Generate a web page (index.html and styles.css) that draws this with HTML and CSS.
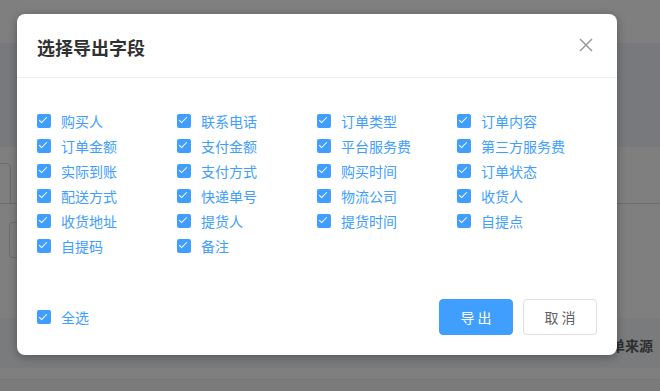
FILE: index.html
```html
<!DOCTYPE html>
<html lang="zh-CN">
<head>
<meta charset="utf-8">
<title>选择导出字段</title>
<link rel="stylesheet" href="styles.css">
</head>
<body>
<div class="page">
  <div class="topbar"></div>
  <div class="band"></div>
  <div class="tabs"><div class="tab"></div></div>
  <div class="filters"><div class="input"></div></div>
  <div class="table">
    <div class="thead"><span class="th">订单来源</span></div>
    <div class="trow"></div>
    <div class="trow alt"></div>
  </div>
</div>

<div class="mask"></div>

<div class="dialog" role="dialog">
  <div class="dlg-header">
    <span class="dlg-title">选择导出字段</span>
    <button class="dlg-close" aria-label="关闭">
      <svg width="14" height="14" viewBox="0 0 14 14"><path d="M1 1L13 13M13 1L1 13" stroke="#909399" stroke-width="1.4" fill="none"/></svg>
    </button>
  </div>
  <div class="dlg-body">
    <div class="grid">
      <label class="cb"><span class="box"></span><span class="lbl">购买人</span></label>
      <label class="cb"><span class="box"></span><span class="lbl">联系电话</span></label>
      <label class="cb"><span class="box"></span><span class="lbl">订单类型</span></label>
      <label class="cb"><span class="box"></span><span class="lbl">订单内容</span></label>
      <label class="cb"><span class="box"></span><span class="lbl">订单金额</span></label>
      <label class="cb"><span class="box"></span><span class="lbl">支付金额</span></label>
      <label class="cb"><span class="box"></span><span class="lbl">平台服务费</span></label>
      <label class="cb"><span class="box"></span><span class="lbl">第三方服务费</span></label>
      <label class="cb"><span class="box"></span><span class="lbl">实际到账</span></label>
      <label class="cb"><span class="box"></span><span class="lbl">支付方式</span></label>
      <label class="cb"><span class="box"></span><span class="lbl">购买时间</span></label>
      <label class="cb"><span class="box"></span><span class="lbl">订单状态</span></label>
      <label class="cb"><span class="box"></span><span class="lbl">配送方式</span></label>
      <label class="cb"><span class="box"></span><span class="lbl">快递单号</span></label>
      <label class="cb"><span class="box"></span><span class="lbl">物流公司</span></label>
      <label class="cb"><span class="box"></span><span class="lbl">收货人</span></label>
      <label class="cb"><span class="box"></span><span class="lbl">收货地址</span></label>
      <label class="cb"><span class="box"></span><span class="lbl">提货人</span></label>
      <label class="cb"><span class="box"></span><span class="lbl">提货时间</span></label>
      <label class="cb"><span class="box"></span><span class="lbl">自提点</span></label>
      <label class="cb"><span class="box"></span><span class="lbl">自提码</span></label>
      <label class="cb"><span class="box"></span><span class="lbl">备注</span></label>
    </div>
  </div>
  <div class="dlg-footer">
    <label class="cb"><span class="box"></span><span class="lbl">全选</span></label>
    <div class="btns">
      <button class="btn primary">导 出</button>
      <button class="btn">取 消</button>
    </div>
  </div>
</div>
</body>
</html>
```

FILE: styles.css
```css
* { box-sizing: border-box; }
html, body { margin: 0; padding: 0; }
body {
  width: 660px;
  height: 391px;
  overflow: hidden;
  background: #fff;
  font-family: "Noto Sans CJK SC", "Noto Sans", sans-serif;
  position: relative;
}

/* underlying page */
.page { width: 660px; }
.topbar { height: 43px; background: #fff; }
.band { height: 104px; background: #eff3f9; }
.tabs {
  height: 57px;
  padding-top: 16px;
  border-bottom: 1px solid #d6d9df;
  display: flex;
}
.tab {
  width: 11px;
  height: 40px;
  border: 1px solid #d6d9df;
  border-left: none;
  border-bottom: none;
  border-radius: 0 5px 0 0;
}
.filters { height: 114px; padding: 18px 0 0 9px; }
.input {
  width: 200px;
  height: 36px;
  border: 1px solid #d6d9df;
  border-radius: 4px;
}
.table { width: 660px; }
.thead {
  height: 50px;
  background: #f5f7fa;
  display: flex;
  align-items: center;
  padding-left: 597px;
  padding-top: 4px;
}
.th {
  font-size: 14px;
  font-weight: 700;
  color: #5a5c60;
  white-space: nowrap;
}
.trow { height: 12px; background: #fff; border-bottom: 1px solid #e8eaef; }
.trow.alt { height: 20px; background: #f6f7f9; border-bottom: none; }

.mask {
  position: absolute;
  inset: 0;
  background: rgba(0, 0, 0, 0.5);
}

/* dialog */
.dialog {
  position: absolute;
  left: 17px;
  top: 14px;
  width: 600px;
  height: 341px;
  background: #fff;
  border-radius: 8px;
  box-shadow: 0 2px 10px rgba(0, 0, 0, 0.3);
  display: flex;
  flex-direction: column;
}
.dlg-header {
  height: 64px;
  padding: 21px 20px 18px;
  border-bottom: 1px solid #ebeef5;
  display: flex;
  align-items: center;
  justify-content: space-between;
}
.dlg-title {
  font-size: 18px;
  line-height: 24px;
  font-weight: 700;
  color: #303133;
}
.dlg-close {
  border: none;
  background: none;
  padding: 0;
  width: 14px;
  height: 14px;
  margin-right: 4px;
  margin-top: -4px;
  display: flex;
}
.dlg-body {
  padding: 30px 20px 21px;
}
.grid {
  display: grid;
  grid-template-columns: repeat(4, 140px);
  grid-auto-rows: 25px;
}
.cb {
  display: flex;
  align-items: center;
  height: 25px;
  cursor: pointer;
}
.box {
  width: 14px;
  height: 14px;
  border-radius: 2px;
  background: #409eff;
  position: relative;
  flex: none;
}
.box::after {
  content: "";
  position: absolute;
  left: 4px;
  top: 1.5px;
  width: 3px;
  height: 7px;
  border: 1px solid #fff;
  border-left: none;
  border-top: none;
  transform: rotate(45deg);
}
.lbl {
  margin-left: 10px;
  font-size: 14px;
  color: #409eff;
  white-space: nowrap;
}
.dlg-footer {
  flex: 1;
  display: flex;
  align-items: center;
  justify-content: space-between;
  padding: 0 20px;
}
.btns { display: flex; gap: 10px; }
.btn {
  width: 74px;
  height: 36px;
  border-radius: 4px;
  border: 1px solid #dcdfe6;
  background: #fff;
  color: #606266;
  font-family: "Noto Sans CJK SC", "Noto Sans", sans-serif;
  font-size: 14px;
  padding: 0;
  white-space: pre;
}
.btn.primary {
  background: #409eff;
  border-color: #409eff;
  color: #fff;
}
```
